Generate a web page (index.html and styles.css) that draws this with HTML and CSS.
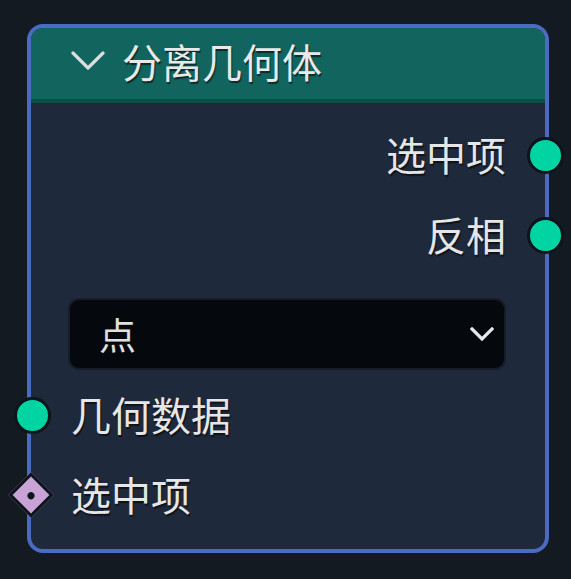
FILE: index.html
```html
<!DOCTYPE html>
<html lang="zh">
<head>
<meta charset="utf-8">
<link rel="stylesheet" href="styles.css">
</head>
<body>
<div class="node">
  <div class="header">
    <svg class="collapse" width="34" height="20" viewBox="0 0 34 20"><path d="M2 2 L17 17 L32 2" fill="none" stroke="#d8dedd" stroke-width="3.2" stroke-linecap="round" stroke-linejoin="round"/></svg>
    <span class="title">分离几何体</span>
  </div>
  <div class="body">
    <div class="row out"><span class="label">选中项</span><span class="socket circle"></span></div>
    <div class="row out"><span class="label">反相</span><span class="socket circle"></span></div>
    <div class="select">
      <span class="sel-text">点</span>
      <svg width="24" height="14" viewBox="0 0 24 14"><path d="M2 2 L12 12 L22 2" fill="none" stroke="#e8e8e8" stroke-width="3.2" stroke-linecap="square" stroke-linejoin="miter"/></svg>
    </div>
    <div class="row in"><span class="socket circle"></span><span class="label">几何数据</span></div>
    <div class="row in"><span class="socket diamond"><span class="dot"></span></span><span class="label">选中项</span></div>
  </div>
</div>
</body>
</html>
```
FILE: styles.css
```css
html, body {
  margin: 0;
  padding: 0;
  background: #131a22;
  width: 571px;
  height: 579px;
  overflow: hidden;
  font-family: "Noto Sans CJK SC", "Noto Sans", sans-serif;
}
.node {
  position: relative;
  box-sizing: border-box;
  margin: 24px 0 0 27px;
  width: 522px;
  height: 529px;
  border: 4px solid #4a6bc1;
  border-radius: 16px;
  background: #1e293b;
}
.header {
  display: flex;
  align-items: center;
  height: 71px;
  background: #12645e;
  border-bottom: 4px solid #0e4c46;
  border-radius: 12px 12px 0 0;
  padding-left: 40px;
}
.collapse {
  margin-top: -6px;
}
.title {
  margin-left: 17px;
  font-size: 40px;
  line-height: 1;
  color: #e8e9e9;
  text-shadow: 1px 2px 1px rgba(0,0,0,0.55);
  margin-top: -6px;
}
.body {
  padding-top: 12px;
  display: flex;
  flex-direction: column;
}
.row {
  position: relative;
  height: 80px;
  display: flex;
  align-items: center;
  font-size: 40px;
  color: #e6e6e6;
  text-shadow: 1px 2px 1px rgba(0,0,0,0.55);
}
.row.out {
  justify-content: flex-end;
  padding-right: 39px;
}
.row.in {
  padding-left: 40px;
}
.label {
  line-height: 1;
  margin-top: -2px;
}
.socket {
  position: absolute;
  top: 50%;
  box-sizing: border-box;
}
.socket.circle {
  width: 37px;
  height: 37px;
  margin-top: -18px;
  border-radius: 50%;
  background: #00d4a3;
  border: 3px solid #0d141c;
}
.row.out .socket {
  right: -19px;
}
.row.in .socket {
  left: -17px;
}
.socket.diamond {
  width: 32px;
  height: 32px;
  margin-top: -16px;
  left: -16px !important;
  background: #c9a3d6;
  border: 3px solid #0d141c;
  transform: rotate(45deg);
  display: flex;
  align-items: center;
  justify-content: center;
}
.dot {
  width: 7px;
  height: 7px;
  border-radius: 50%;
  background: #0d141c;
}
.select {
  margin: 23px 39px 5px 37px;
  height: 72px;
  box-sizing: border-box;
  background: #05080c;
  border: 2px solid #161d29;
  border-radius: 11px;
  display: flex;
  align-items: center;
  justify-content: space-between;
  padding: 0 10px 0 29px;
}
.sel-text {
  font-size: 37px;
  color: #e0e0e0;
  line-height: 1;
}
```
